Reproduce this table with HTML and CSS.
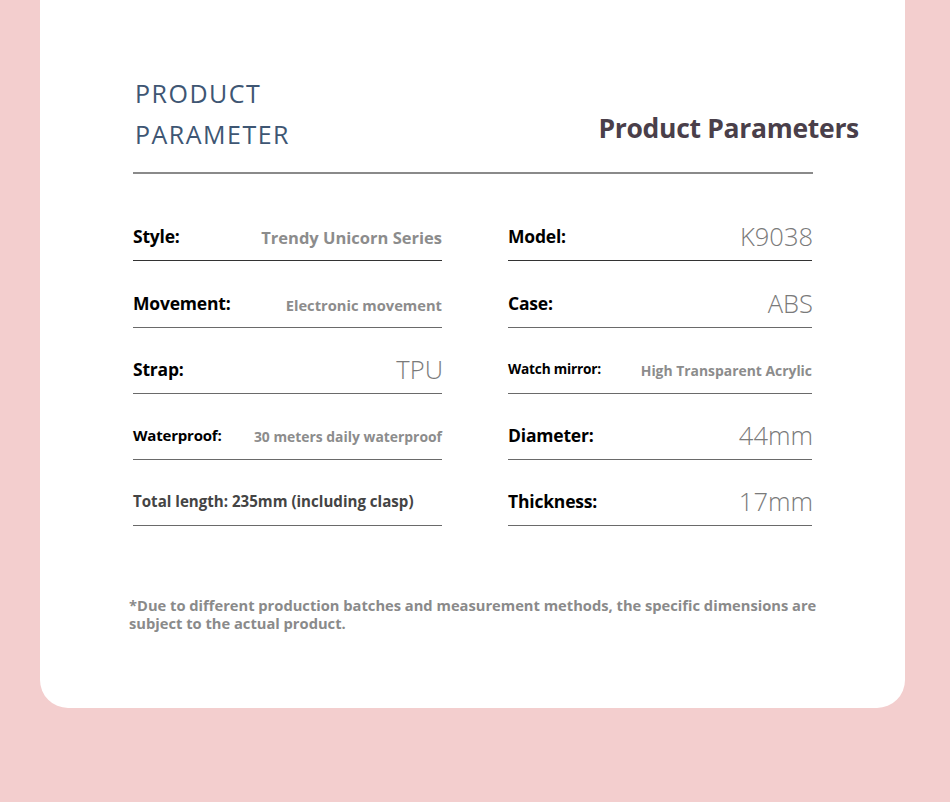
FILE: index.html
```html
<!DOCTYPE html>
<html>
<head>
<meta charset="utf-8">
<link rel="stylesheet" href="styles.css">
</head>
<body>
<div class="card">
  <div class="head">
    <div class="title-en"><div>PRODUCT</div><div>PARAMETER</div></div>
    <div class="title">Product Parameters</div>
  </div>
  <div class="rule"></div>
  <div class="grid">
    <div class="cell c1"><span class="label">Style:</span><span class="val">Trendy Unicorn Series</span></div>
    <div class="cell c1"><span class="label">Model:</span><span class="val light">K9038</span></div>
    <div class="cell"><span class="label">Movement:</span><span class="val sm">Electronic movement</span></div>
    <div class="cell"><span class="label">Case:</span><span class="val light">ABS</span></div>
    <div class="cell"><span class="label">Strap:</span><span class="val light">TPU</span></div>
    <div class="cell"><span class="label sm">Watch mirror:</span><span class="val xs">High Transparent Acrylic</span></div>
    <div class="cell"><span class="label wp">Waterproof:</span><span class="val xs">30 meters daily waterproof</span></div>
    <div class="cell"><span class="label">Diameter:</span><span class="val light">44mm</span></div>
    <div class="cell"><span class="label total">Total length: 235mm (including clasp)</span></div>
    <div class="cell"><span class="label">Thickness:</span><span class="val light">17mm</span></div>
  </div>
  <p class="note">*Due to different production batches and measurement methods, the specific dimensions are<br>subject to the actual product.</p>
</div>
</body>
</html>
```
FILE: styles.css
```css
html, body { margin: 0; padding: 0; }
body {
  background: #f3cece;
  width: 950px;
  height: 802px;
  overflow: hidden;
  font-family: "Open Sans", "Noto Sans", sans-serif;
}
.card {
  width: 865px;
  height: 708px;
  margin-left: 40px;
  background: #fff;
  border-radius: 0 0 28px 28px;
  box-sizing: border-box;
  padding-top: 73px;
}
.head {
  display: flex;
  justify-content: space-between;
  align-items: flex-end;
  padding: 0 46px 0 95px;
}
.title-en {
  font-size: 25px;
  line-height: 41px;
  letter-spacing: 1.5px;
  color: #3e5673;
  font-weight: 400;
}
.title {
  font-size: 26.5px;
  font-weight: 700;
  color: #4a3f4a;
  margin-bottom: 9px;
  letter-spacing: -0.3px;
}
.rule {
  margin: 17px 92px 0 93px;
  border-top: 2px solid #8a8a8a;
}
.grid {
  display: grid;
  grid-template-columns: 309px 304px;
  column-gap: 66px;
  padding-left: 93px;
  margin-top: 21px;
}
.cell {
  height: 66.3px;
  box-sizing: border-box;
  display: flex;
  justify-content: space-between;
  align-items: flex-end;
  padding-bottom: 9px;
  border-bottom: 1.5px solid #6a6a6a;
}
.cell.c1 { border-bottom-color: #333; }
.label {
  font-size: 17.5px;
  font-weight: 700;
  color: #000;
  line-height: 22px;
  padding-bottom: 4px;
  letter-spacing: -0.2px;
}
.label.sm { font-size: 13.7px; }
.label.wp { font-size: 15px; }
.label.total { font-size: 15.1px; color: #444; letter-spacing: 0; }
.val {
  font-size: 16.5px;
  font-weight: 700;
  color: #8c8c8c;
  line-height: 22px;
  padding-bottom: 2px;
}
.val.sm { font-size: 14.7px; }
.val.xs { font-size: 13.9px; }
.val.light {
  font-size: 25.5px;
  font-weight: 300;
  color: #7a7a7a;
  line-height: 30px;
  padding-bottom: 0;
  margin-right: -1px;
}
.note {
  margin: 70px 0 0 89px;
  font-size: 14.7px;
  line-height: 18px;
  font-weight: 700;
  color: #8a8a8a;
}
```
